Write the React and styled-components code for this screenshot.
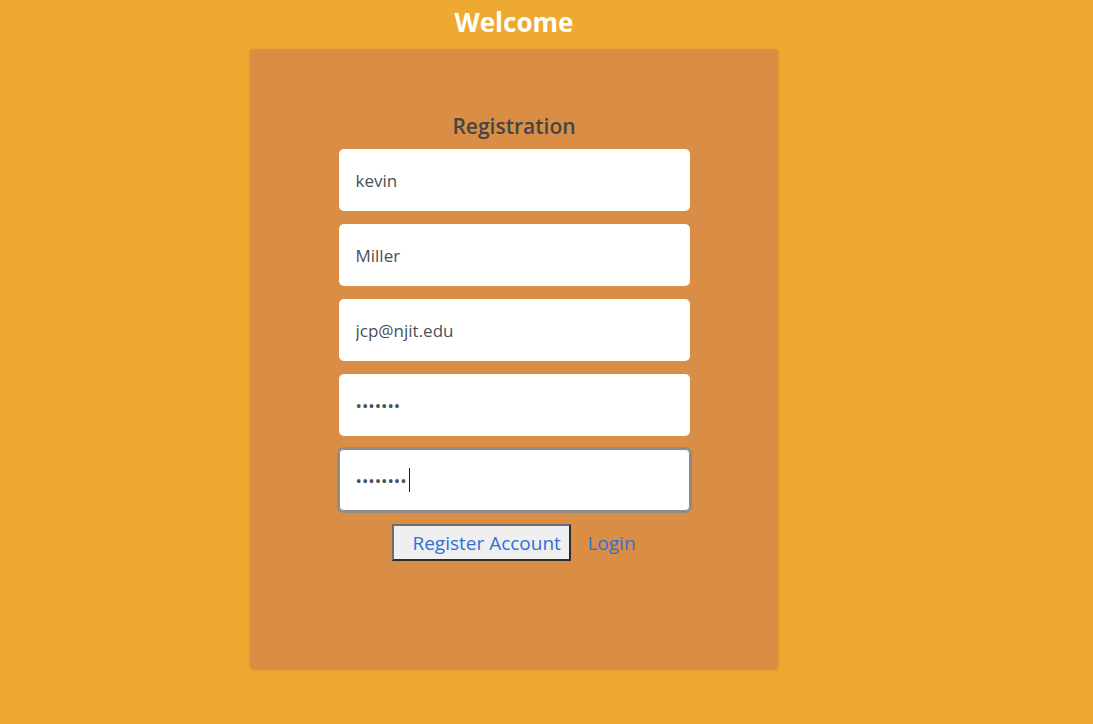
import React from "react";
import styled, { createGlobalStyle } from "styled-components";

const GlobalStyle = createGlobalStyle`
  html, body {
    margin: 0;
    padding: 0;
    background: #eea931;
    font-family: "Open Sans", "Noto Sans", sans-serif;
  }
`;

const fields = [
  { type: "text", value: "kevin" },
  { type: "text", value: "Miller" },
  { type: "email", value: "jcp@njit.edu" },
  { type: "password", value: "1234567" },
  { type: "password", value: "12345678", focused: true },
];

export default function App() {
  return (
    <Page>
      <GlobalStyle />
      <Wrapper>
        <Title>Welcome</Title>
        <Card>
          <Heading>Registration</Heading>
          <Form onSubmit={(e) => e.preventDefault()}>
            {fields.map((f, i) => (
              <FieldBox key={i}>
                <Field type={f.type} defaultValue={f.value} $focused={f.focused} />
                {f.focused && <Caret />}
              </FieldBox>
            ))}
            <Actions>
              <RegisterButton type="submit">Register Account</RegisterButton>
              <LoginLink href="#">Login</LoginLink>
            </Actions>
          </Form>
        </Card>
      </Wrapper>
    </Page>
  );
}

const Page = styled.div`
  width: 100%;
  min-height: 724px;
  background: #eea931;
`;

const Wrapper = styled.div`
  width: 528px;
  margin-left: 250px;
  display: flex;
  flex-direction: column;
  align-items: center;
`;

const Title = styled.h1`
  margin: 0;
  height: 44px;
  line-height: 44px;
  font-size: 26px;
  font-weight: 700;
  color: #ffffff;
  margin-bottom: 5px;
`;

const Card = styled.div`
  width: 528px;
  height: 620px;
  box-sizing: border-box;
  padding-top: 63px;
  background: #da8e45;
  border-radius: 3px;
  box-shadow: 0 1px 3px rgba(120, 70, 20, 0.25);
  display: flex;
  flex-direction: column;
  align-items: center;
`;

const Heading = styled.h2`
  margin: 0 0 8px;
  font-size: 21px;
  line-height: 29px;
  font-weight: 600;
  color: #454545;
`;

const Form = styled.form`
  display: flex;
  flex-direction: column;
  align-items: center;
  gap: 13px;
`;

const FieldBox = styled.div`
  position: relative;
  width: 351px;
  height: 62px;
`;

const Field = styled.input`
  width: 100%;
  height: 100%;
  box-sizing: border-box;
  padding: 0 17px;
  border: none;
  border-radius: 5px;
  background: #ffffff;
  font-family: "Open Sans", "Noto Sans", sans-serif;
  font-size: 17px;
  color: #495057;
  outline: none;
  box-shadow: ${(p) =>
    p.$focused ? "0 0 0 2px #8f8a85, inset 0 0 0 1px #8f8a85" : "none"};
`;

const Caret = styled.span`
  position: absolute;
  left: 70px;
  top: 19px;
  width: 1px;
  height: 24px;
  background: #1e1e1e;
`;

const Actions = styled.div`
  display: flex;
  align-items: center;
  gap: 16px;
`;

const RegisterButton = styled.button`
  height: 37px;
  width: 179px;
  box-sizing: border-box;
  padding: 0 8px 0 18px;
  background: #efefef;
  border: 2px solid #2b2b2b;
  border-top-color: #6d6d6d;
  border-left-color: #6d6d6d;
  font-family: "Open Sans", "Noto Sans", sans-serif;
  font-size: 19px;
  color: #2f6fd8;
  text-align: left;
  cursor: pointer;
`;

const LoginLink = styled.a`
  font-size: 19px;
  color: #2f6fd8;
  text-decoration: none;
`;
